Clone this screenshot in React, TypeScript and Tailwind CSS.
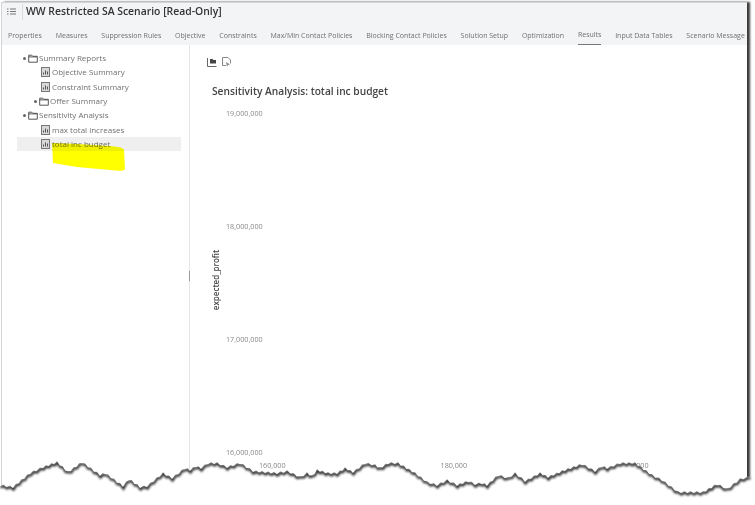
const tabs = [
  'Properties', 'Measures', 'Suppression Rules', 'Objective', 'Constraints', 'Max/Min Contact Policies',
  'Blocking Contact Policies', 'Solution Setup', 'Optimization', 'Results', 'Input Data Tables', 'Scenario Message',
];

// traced outline of the torn bottom edge
const tear: [number, number][] = [
  [0, 485], [13, 487], [30, 473], [43, 467], [57, 462], [68, 472], [82, 462], [100, 475], [105, 473], [123, 486],
  [129, 479], [140, 487], [147, 486], [163, 473], [172, 478], [185, 468], [190, 470], [196, 466], [201, 468],
  [208, 463], [217, 463], [227, 467], [240, 463], [253, 471], [277, 473], [287, 471], [300, 477], [307, 473],
  [312, 476], [317, 470], [328, 473], [337, 473], [345, 468], [353, 472], [365, 463], [375, 465], [380, 468],
  [388, 463], [398, 463], [415, 473], [427, 482], [437, 485], [447, 480], [457, 485], [468, 481], [475, 484],
  [482, 483], [487, 485], [498, 475], [508, 478], [515, 473], [525, 481], [540, 473], [548, 477], [562, 471],
  [582, 464], [595, 471], [602, 466], [607, 468], [620, 463], [635, 463], [652, 475], [662, 480], [678, 492],
  [703, 492], [717, 484], [727, 489], [740, 479], [750, 477],
];

function jagged(points: [number, number][]) {
  const out: string[] = [];
  let n = 0;
  for (let i = 0; i < points.length - 1; i++) {
    const [x1, y1] = points[i];
    const [x2, y2] = points[i + 1];
    const steps = Math.max(1, Math.round((x2 - x1) / 3));
    for (let s = 0; s < steps; s++) {
      const x = x1 + ((x2 - x1) * s) / steps;
      const y = y1 + ((y2 - y1) * s) / steps + (n++ % 2 === 0 ? 1 : -1);
      out.push(`${x.toFixed(1)},${y.toFixed(1)}`);
    }
  }
  out.push(points[points.length - 1].join(','));
  return out.join(' ');
}

function FolderIcon() {
  return (
    <svg width="10" height="9" viewBox="0 0 10 9" className="shrink-0">
      <path d="M0.7 8.2V1.2H3.8L4.8 2.3H9.3V8.2Z" fill="#fff" stroke="#555" strokeWidth="1" />
      <path d="M0.7 2.9H9.3" stroke="#555" strokeWidth="1" />
    </svg>
  );
}

function ReportIcon() {
  return (
    <svg width="9" height="10" viewBox="0 0 9 10" className="shrink-0">
      <rect x="0.5" y="0.5" width="8" height="9" fill="#d8d8d8" stroke="#777" />
      <path d="M2.5 7.5V5.5M4.5 7.5V3.5M6.5 7.5V4.5" stroke="#555" strokeWidth="1" />
    </svg>
  );
}

function Caret() {
  return <span className="h-[3px] w-[3px] shrink-0 rounded-full bg-[#666]" />;
}

function TreeRow({ indent, icon, label, selected }: { indent: string; icon: 'open' | 'closed' | 'report'; label: string; selected?: boolean }) {
  return (
    <div className={`flex h-[14.3px] items-center ${indent} ${selected ? 'bg-[#efefef]' : ''}`}>
      {icon !== 'report' && <Caret />}
      {icon !== 'report' && <span className="w-[2px]" />}
      {icon === 'report' ? <ReportIcon /> : <FolderIcon />}
      <span className={`whitespace-nowrap text-[8px] text-[#707070] ${icon === 'report' ? 'ml-[2px]' : 'ml-[1px]'}`}>{label}</span>
    </div>
  );
}

export default function App() {
  const edge = jagged(tear);

  return (
    <div className="relative h-[505px] w-[755px] overflow-hidden bg-white font-['Open_Sans',sans-serif]">
      <div className="ml-[1px] mt-[2px] flex h-[503px] w-[746px] flex-col border-l border-t border-[#d4d4d4] bg-white shadow-[3px_0_2px_#3a3a3a] blur-[0.45px]">
        <div className="h-[42px] shrink-0 bg-[#f3f4f6]">
          <div className="flex h-[17px] items-center">
            <svg width="9" height="7" viewBox="0 0 9 7" className="ml-[5px]">
              <path d="M0 1H1.5M3 1H9M0 3.5H1.5M3 3.5H9M0 6H1.5M3 6H9" stroke="#777" strokeWidth="1" />
            </svg>
            <span className="ml-[6px] h-[16px] border-l border-[#dcdcdc]" />
            <span className="ml-[3px] whitespace-nowrap text-[10.4px] font-semibold text-[#333]">WW Restricted SA Scenario [Read-Only]</span>
          </div>
          <div className="flex h-[25px] items-stretch gap-[13.8px] pl-[6px]">
            {tabs.map((tab) => (
              <div
                key={tab}
                className={`flex items-center whitespace-nowrap pt-[7px] text-[7px] text-[#707070] ${tab === 'Results' ? 'border-b border-[#777]' : ''}`}
              >
                {tab}
              </div>
            ))}
          </div>
        </div>

        <div className="flex min-h-0 flex-1">
          <div className="w-[187px] shrink-0 pl-[15px] pr-[8px] pt-[6px]">
            <TreeRow indent="pl-[6px]" icon="open" label="Summary Reports" />
            <TreeRow indent="pl-[24px]" icon="report" label="Objective Summary" />
            <TreeRow indent="pl-[24px]" icon="report" label="Constraint Summary" />
            <TreeRow indent="pl-[17px]" icon="closed" label="Offer Summary" />
            <TreeRow indent="pl-[6px]" icon="open" label="Sensitivity Analysis" />
            <TreeRow indent="pl-[24px]" icon="report" label="max total increases" />
            <TreeRow indent="pl-[24px]" icon="report" label="total inc budget" selected />
          </div>

          <div className="relative flex-1 border-l border-[#e4e4e4] pl-[22px] pt-[12px]">
            <span className="absolute -left-[1px] top-[226px] h-[10px] w-[1px] bg-[#999]" />
            <div className="ml-[-5px] flex h-[10px] items-center gap-[5px]">
              <svg width="10" height="10" viewBox="0 0 10 10">
                <path d="M0.5 1V9.5H9.5" fill="none" stroke="#666" />
                <path d="M3 2H5.5L6.5 3H9V6.5H3Z" fill="#444" />
              </svg>
              <svg width="9" height="10" viewBox="0 0 9 10">
                <path d="M0.5 0.5H6L8.5 3V6.5M4 8.5H0.5V0.5" fill="none" stroke="#888" />
                <path d="M4 5L8 7.5L6 8L5 9.8Z" fill="#888" />
              </svg>
            </div>
            <h1 className="mt-[16px] whitespace-nowrap text-[10.2px] font-semibold leading-[16px] text-[#444]">
              Sensitivity Analysis: total inc budget
            </h1>

            <div className="mt-[9px] flex h-[349px] flex-col justify-between pl-[14px]">
              <span className="text-[7.2px] leading-[10px] text-[#888]">19,000,000</span>
              <span className="text-[7.2px] leading-[10px] text-[#888]">18,000,000</span>
              <span className="text-[7.2px] leading-[10px] text-[#888]">17,000,000</span>
              <span className="text-[7.2px] leading-[10px] text-[#888]">16,000,000</span>
            </div>
            <div className="absolute left-[69px] top-[415px] flex gap-[155px]">
              <span className="text-[7.2px] leading-[10px] text-[#888]">160,000</span>
              <span className="text-[7.2px] leading-[10px] text-[#888]">180,000</span>
              <span className="text-[7.2px] leading-[10px] text-[#888]">200,000</span>
            </div>
            <span className="absolute left-[-5px] top-[230px] w-[62px] -rotate-90 whitespace-nowrap text-center text-[8px] font-semibold leading-[10px] text-[#444]">
              expected_profit
            </span>
          </div>
        </div>
      </div>

      {/* yellow marker scribble */}
      <svg width="755" height="505" className="pointer-events-none absolute left-0 top-0 mix-blend-multiply">
        <path d="M52 143L78 144L110 146Q124 147 124 150L125 169Q124 172 110 170L77 167L53 163Z" fill="#ffff00" />
      </svg>

      {/* torn paper edge */}
      <svg width="755" height="505" className="pointer-events-none absolute left-0 top-0">
        <defs>
          <clipPath id="below-tear">
            <polygon points={`${edge} 755,477 755,505 0,505`} />
          </clipPath>
          <filter id="tear-shadow" x="-5%" y="-50%" width="110%" height="200%">
            <feGaussianBlur stdDeviation="1.1" />
          </filter>
        </defs>
        <polygon points={`${edge} 755,477 755,505 0,505`} fill="#fff" />
        <g clipPath="url(#below-tear)">
          <polyline points={edge} fill="none" stroke="#222" strokeWidth="2.4" transform="translate(0.5 1.4)" filter="url(#tear-shadow)" />
        </g>
      </svg>
    </div>
  );
}
